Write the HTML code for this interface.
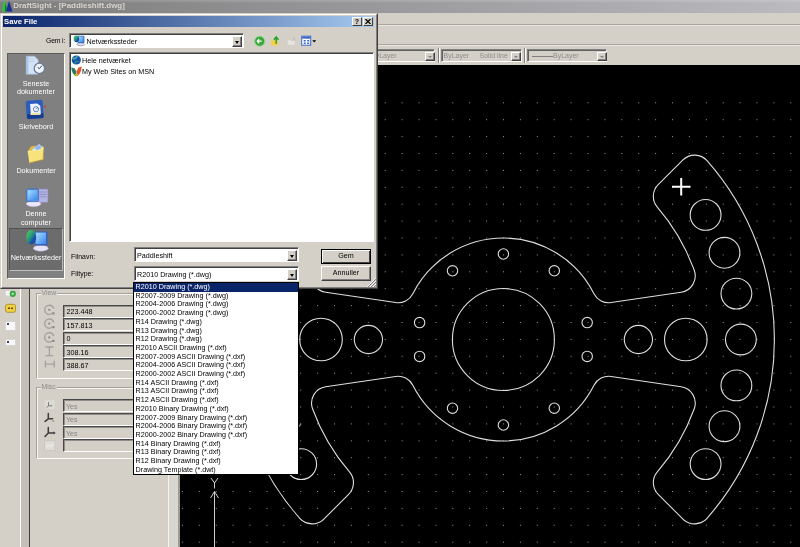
<!DOCTYPE html>
<html><head><meta charset="utf-8"><title>DraftSight</title>
<style>
html,body{margin:0;padding:0;}
body{will-change:transform;width:800px;height:547px;overflow:hidden;position:relative;background:#d4d0c8;font-family:"Liberation Sans",sans-serif;font-size:7.2px;color:#000;}
div,span{position:absolute;box-sizing:border-box;white-space:nowrap;}
.cad{position:absolute;left:180px;top:65px;}
#title{left:0;top:0;width:800px;height:12.5px;background:linear-gradient(180deg,rgba(255,255,255,0.18),rgba(255,255,255,0) 3px),linear-gradient(90deg,#7c7c7c,#bababf);}
#title span{left:13.3px;top:0.3px;font-weight:bold;font-size:7.95px;color:#d8d4cc;line-height:11px;}
.hl{height:1px;left:377px;width:423px;}
/* dialog */
#dlg{left:0;top:12.5px;width:378px;height:276px;background:#d4d0c8;border:1px solid;border-color:#d4d0c8 #404040 #404040 #d4d0c8;}
#dlg .in{left:0;top:0;right:0;bottom:0;border:1px solid;border-color:#fff #808080 #808080 #fff;}
#dt{left:2px;top:2px;width:371px;height:11.5px;background:linear-gradient(90deg,#0a246a,#a6caf0);}
#dt span{left:1px;top:0.2px;color:#fff;font-weight:bold;font-size:7.7px;line-height:11px;}
.tb{top:1px;width:10px;height:9px;background:#d4d0c8;border:1px solid;border-color:#fff #404040 #404040 #fff;font-weight:bold;font-size:7px;line-height:7px;text-align:center;}
.sunk{border:1px solid;border-color:#808080 #fff #fff #808080;box-shadow:inset 1px 1px 0 #404040;background:#fff;}
.lbl{line-height:9px;font-size:6.9px;}
.btn{background:#d4d0c8;border:1px solid;border-color:#fff #404040 #404040 #fff;box-shadow:inset -1px -1px 0 #808080;text-align:center;line-height:12px;}
.arr{width:10px;background:#d4d0c8;border:1px solid;border-color:#fff #404040 #404040 #fff;box-shadow:inset -1px -1px 0 #808080;}
.arr:after{content:"";position:absolute;left:1.5px;top:4px;border:2.5px solid transparent;border-top:3px solid #000;border-bottom:0;}
#places{left:6px;top:39.5px;width:57.5px;height:225.5px;background:#808080;border:1px solid;border-color:#5c5c5c #fff #fff #5c5c5c;}
#places .pt{left:0;width:56px;text-align:center;color:#fff;line-height:8.2px;}
#drop{left:133px;top:282px;width:166px;height:193px;background:#fff;border:1px solid #000;}
.it{position:relative;height:8.71px;line-height:8.71px;padding-left:1.6px;font-size:7.2px;}
.it.sel{background:#0a246a;color:#fff;}
/* left panel */
.grp{border:1px solid;border-color:#a6a29a #fff #fff #a6a29a;box-shadow:inset 1px 1px 0 #f6f5f2;}
.grpl{background:#d4d0c8;color:#8a8a8a;padding:0 1px;line-height:8px;font-size:6.9px;}
.fld{left:63px;width:80px;height:13px;border:1px solid;border-color:#484848 #fff #fff #484848;box-shadow:inset 1px 1px 0 rgba(64,64,64,0.45);background:#d4d0c8;}
.fld span{left:2.5px;top:2.5px;line-height:8px;}
.fld.dis span{color:#858585;font-size:7px;left:2px;}
.cmb{top:49px;height:12.5px;border:1px solid;border-color:#808080 #fff #fff #808080;box-shadow:inset 1px 1px 0 #606060;color:#8e8e8e;}
.cmb span{top:1.5px;line-height:8px;font-size:7px;}
.cmb .arr{top:1.5px;height:9.5px;width:10px;}
.cmb .arr:after{left:2px;top:3px;border:2px solid transparent;border-top:2.5px solid #808080;border-bottom:0;}
</style></head><body>
<div id="title"><span>DraftSight - [Paddleshift.dwg]</span>
<svg style="position:absolute;left:1px;top:0" width="13" height="13" viewBox="0 0 13 13"><path d="M1,11.5 L2.5,1.5 L4.5,1.5 L6.5,11.5 Z" fill="#30c43c"/><path d="M5,11.5 L8,1 L11.5,11.5 Z" fill="#1c2a9c"/><path d="M4.2,3 L5.6,8 L5,11.5 L4,11.5Z" fill="#0c6a2a"/></svg>
</div>
<div class="hl" style="top:24px;background:#a9a59d"></div><div class="hl" style="top:25px;background:#e9e7e2"></div>
<div class="hl" style="top:44px;background:#a9a59d"></div><div class="hl" style="top:45px;background:#e9e7e2"></div>
<div class="cmb" style="left:360px;width:75px;"><span style="left:10px">ByLayer</span><div class="arr" style="left:64px"></div></div>
<div style="left:438px;top:48px;width:2px;height:15px;border-left:1px solid #808080;border-right:1px solid #fff"></div>
<div class="cmb" style="left:441px;width:81px;"><span style="left:1.5px">ByLayer</span><span style="left:37.5px">Solid line</span><div class="arr" style="left:69px"></div></div>
<div style="left:524px;top:48px;width:2px;height:15px;border-left:1px solid #808080;border-right:1px solid #fff"></div>
<div class="cmb" style="left:527px;width:80px;"><div style="left:4px;top:6px;width:21px;height:1px;background:#808080"></div><span style="left:25px">ByLayer</span><div class="arr" style="left:68.5px"></div></div>
<svg class="cad" width="620" height="482" viewBox="180 65 620 482">
<defs>
<pattern id="grid" x="12.90" y="0.90" width="16.9" height="16.9" patternUnits="userSpaceOnUse"><rect x="0" y="0" width="1" height="1" fill="#969696"/></pattern>
<path id="q" d="M 0,-101.5 A 101.5 101.5 0 0 1 90.57,-45.81 A 16.5 16.5 0 0 0 107.70,-36.93 L 177.74,-47.24 A 16.5 16.5 0 0 0 190.85,-69.19 A 203.0 203.0 0 0 0 153.93,-132.35 A 16.5 16.5 0 0 1 154.77,-154.77 L 179.58,-179.58 A 16.5 16.5 0 0 1 203.65,-178.80 A 271.0 271.0 0 0 1 271.0,0"/>
</defs>
<rect x="180" y="65" width="620" height="482" fill="#000"/>
<rect x="180" y="96" width="620" height="451" fill="url(#grid)"/>
<g transform="translate(503.4,339.5)" fill="none" stroke="#dedede" stroke-width="1.1">
<use href="#q" transform="scale(1,1)"/>
<use href="#q" transform="scale(1,-1)"/>
<use href="#q" transform="scale(-1,1)"/>
<use href="#q" transform="scale(-1,-1)"/>
<circle cx="0.0" cy="-85.5" r="5.2"/>
<circle cx="0.0" cy="85.5" r="5.2"/>
<circle cx="50.9" cy="-68.7" r="5.2"/>
<circle cx="50.9" cy="68.7" r="5.2"/>
<circle cx="-50.9" cy="-68.7" r="5.2"/>
<circle cx="-50.9" cy="68.7" r="5.2"/>
<circle cx="83.8" cy="-16.9" r="5.2"/>
<circle cx="83.8" cy="16.9" r="5.2"/>
<circle cx="-83.8" cy="-16.9" r="5.2"/>
<circle cx="-83.8" cy="16.9" r="5.2"/>
<circle cx="135.0" cy="0.0" r="14.1"/>
<circle cx="182.4" cy="0.0" r="21.3"/>
<circle cx="237.5" cy="-0.0" r="15.4"/>
<circle cx="233.0" cy="-45.9" r="15.4"/>
<circle cx="233.0" cy="45.9" r="15.4"/>
<circle cx="221.1" cy="-86.7" r="15.4"/>
<circle cx="221.1" cy="86.7" r="15.4"/>
<circle cx="202.2" cy="-124.6" r="15.4"/>
<circle cx="202.2" cy="124.6" r="15.4"/>
<circle cx="-135.0" cy="0.0" r="14.1"/>
<circle cx="-182.4" cy="0.0" r="21.3"/>
<circle cx="-237.5" cy="-0.0" r="15.4"/>
<circle cx="-233.0" cy="-45.9" r="15.4"/>
<circle cx="-233.0" cy="45.9" r="15.4"/>
<circle cx="-221.1" cy="-86.7" r="15.4"/>
<circle cx="-221.1" cy="86.7" r="15.4"/>
<circle cx="-202.2" cy="-124.6" r="15.4"/>
<circle cx="-202.2" cy="124.6" r="15.4"/>
<circle cx="0.0" cy="0.0" r="51"/>
</g>
<g fill="none" stroke="#d0d0d0" stroke-width="1"><path d="M214.5,547 V491.5 M210.5,498 L214.5,491.5 L218.5,498"/><path d="M211,478 L214.5,483 L218,478 M214.5,483 V488.5"/></g>
<path d="M299.2,426.6 L301,423.6" stroke="#8a8a8a" stroke-width="1.2" fill="none"/>
<path d="M672,186.7 H690.5 M681.2,178 V195.5" stroke="#fff" stroke-width="2" fill="none"/>
</svg>
<!-- left panel -->
<div id="lp" style="left:0;top:288px;width:180px;height:259px;background:#d4d0c8;">
 <div style="left:20px;top:0;width:1px;height:259px;background:#fff"></div>
 <div style="left:21px;top:0;width:8px;height:259px;background:#c4c0b8"></div>
 <div style="left:29px;top:0;width:1px;height:259px;background:#404040"></div>
 <div style="left:168px;top:186px;width:10px;height:73px;background:#d9d6cf;border-left:1px solid #f4f3f0;"></div>
 <div style="left:178px;top:186px;width:2px;height:73px;background:#9c9a96"></div>
</div>
<div class="grp" style="left:36px;top:293px;width:120px;height:86px;"></div>
<div class="grpl" style="left:40.5px;top:288.5px;">View</div>
<div class="grp" style="left:36px;top:387px;width:120px;height:72px;"></div>
<div class="grpl" style="left:40.5px;top:382.5px;">Misc</div>
<div class="fld" style="top:304.6px"><span>223.448</span></div>
<div class="fld" style="top:318.2px"><span>157.813</span></div>
<div class="fld" style="top:331.6px"><span>0</span></div>
<div class="fld" style="top:345.0px"><span>308.16</span></div>
<div class="fld" style="top:358.2px"><span>388.67</span></div>
<div class="fld dis" style="top:399.3px"><span>Yes</span></div>
<div class="fld dis" style="top:412.8px"><span>Yes</span></div>
<div class="fld dis" style="top:426.1px"><span>Yes</span></div>
<div class="fld dis" style="top:439.0px"><span></span></div>

<svg style="position:absolute;left:0;top:288px" width="62" height="180" viewBox="0 288 62 180" fill="none">
 <g stroke="#a2a29e" stroke-width="1.4">
  <circle cx="49.3" cy="309.8" r="4.6" stroke-dasharray="24 5" stroke-dashoffset="-3"/><circle cx="49.3" cy="323.6" r="4.6" stroke-dasharray="24 5" stroke-dashoffset="-3"/><circle cx="49.3" cy="337.4" r="4.6" stroke-dasharray="24 5" stroke-dashoffset="-3"/>
  <path d="M45.4,347 H53.4 M45.4,355.6 H53.4 M49.4,347 V355.6" stroke-width="1.3"/>
  <path d="M45.4,360.8 V367.6 M54.2,360.8 V367.6 M45.4,364.2 H54.2" stroke-width="1.3"/>
 </g>
 <g fill="#8a8a88"><circle cx="49.3" cy="309.8" r="1.1"/><circle cx="49.3" cy="323.6" r="1.1"/><circle cx="49.3" cy="337.4" r="1.1"/>
  <rect x="52.5" y="312.3" width="2" height="2.2"/><rect x="52.5" y="326" width="2" height="2.2"/><rect x="52.5" y="339.8" width="2" height="2.2"/></g>
 <rect x="44.7" y="400" width="10" height="9" fill="#dcdad4"/>
 <g stroke="#3c3c3c" stroke-width="1.5" stroke-linecap="round">
  <path d="M48.5,402.5 V405.8 H52 M48.5,405.8 L46.8,407.3" stroke="#7a7a78" stroke-width="1"/>
  <path d="M48.3,413.6 V418.8 H52.6 M48.3,418.8 L45,421.4"/>
  <path d="M48.3,427.4 V432.9 H53.6 M48.3,432.9 L45,436.4"/>
 </g>
 <path d="M53.6,431.3 L55.6,432.9 L53.6,434.5z" fill="#3c3c3c"/><path d="M52.5,420 l1.5,2 m0,-2 l-1.5,2" stroke="#8a8a88" stroke-width="0.7"/>
 <rect x="44.5" y="440.8" width="10.5" height="9.8" fill="#dedcd6" stroke="#c4c0b8" stroke-width="0.6"/><path d="M46,447 l2.5,-2 2,1.5 3,-2.5" stroke="#f2f1ee" stroke-width="1" fill="none"/>
 <!-- strip icons -->
 <rect x="5.8" y="291" width="4.5" height="4.5" fill="#f4f4f4"/><circle cx="12.8" cy="293.8" r="3.1" fill="#2ea43a"/><path d="M11.3,293.8 H14.3 M12.8,292.3 V295.3" stroke="#c8f0c8" stroke-width="0.9"/>
 <rect x="5.5" y="304.3" width="10" height="8" rx="2" fill="#f0d040" stroke="#a08820" stroke-width="0.8"/><path d="M8,308.3 h2 m1,0 h2" stroke="#604800" stroke-width="1.6"/>
 <rect x="5.5" y="321.7" width="10" height="8.6" fill="#f8f8f8" stroke="#c8c8c8" stroke-width="0.5"/><rect x="7" y="323" width="2" height="2" fill="#404060"/>
 <rect x="5.5" y="339.4" width="10" height="6" fill="#f8f8f8" stroke="#c8c8c8" stroke-width="0.5"/><rect x="7" y="341" width="2" height="2" fill="#404060"/>
</svg>
<!-- dialog -->
<div id="dlg"><div class="in"></div>
 <div id="dt"><span>Save File</span>
  <div class="tb" style="left:349px">?</div><div class="tb" style="left:360px">
   <svg style="position:absolute;left:1px;top:1px" width="6" height="5" viewBox="0 0 6 5"><path d="M0.5,0 L5.5,5 M5.5,0 L0.5,5" stroke="#000" stroke-width="1.2"/></svg></div>
 </div>
 <div class="lbl" style="left:45px;top:22.5px;font-size:6.9px;letter-spacing:-0.2px">Gem i:</div>
 <div class="sunk" style="left:68px;top:19.5px;width:175px;height:14.5px;"><span style="left:16.5px;top:2.5px;line-height:9px">Netværkssteder</span><div class="arr" style="left:162px;top:2px;height:10.5px"></div>
  <svg style="position:absolute;left:2.5px;top:1px" width="13" height="11.5" viewBox="0 0 13 11.5"><ellipse cx="7.6" cy="9.3" rx="3.8" ry="1.5" fill="#e4e0f0" stroke="#505a78" stroke-width="0.5"/><rect x="4.6" y="0.8" width="6.8" height="7.2" rx="0.9" fill="#3060b8"/><rect x="5.2" y="1.4" width="5.4" height="5.8" fill="url(#scr)"/><ellipse cx="3.4" cy="3.8" rx="2.8" ry="3.4" fill="url(#glb)"/></svg>
 </div>
 <!-- toolbar icons -->
 <svg style="position:absolute;left:250px;top:19px" width="75" height="17" viewBox="250.8 32.3 75 17">
  <circle cx="259.5" cy="40.5" r="5" fill="#38a838"/><circle cx="259.5" cy="40.5" r="5" fill="none" stroke="#8fd88f" stroke-width="0.8"/><path d="M261.5,40.5 H257 M259,38.3 L257,40.5 L259,42.7" stroke="#fff" stroke-width="1.2" fill="none"/>
  <path d="M271,39 h3 l1,1 h3 v5 h-7z" fill="#f0d050"/><path d="M276,43 V37 M273.7,39 L276,36.3 L278.3,39" stroke="#28a028" stroke-width="1.5" fill="none"/>
  <path d="M287,39 h3 l1,1 h4 v4.5 h-8z" fill="#e6e4de" stroke="#c8c4bc" stroke-width="0.5"/><circle cx="294" cy="38" r="1.3" fill="#c8c4bc"/>
  <rect x="301.5" y="35.5" width="9" height="9" fill="#fff" stroke="#3868c8" stroke-width="1"/><rect x="302" y="36" width="8" height="2" fill="#3868c8"/><path d="M303.5,40 h2 m1.5,0 h2 M303.5,42.5 h2 m1.5,0 h2" stroke="#3868c8" stroke-width="1.4"/>
  <path d="M312,39.5 h4 l-2,2.2z" fill="#000"/>
 </svg>
 <div id="places"><div style="left:0;top:-1px;width:56px;height:224px">
  <div style="left:1px;top:175px;width:54px;height:43px;background:#6c6c6c;border:1px solid;border-color:#505050 #b8b8b8 #c0c0c0 #505050;"></div>
  <div class="pt" style="top:26.5px">Seneste</div><div class="pt" style="top:35px">dokumenter</div>
  <div class="pt" style="top:70px">Skrivebord</div>
  <div class="pt" style="top:113.5px">Dokumenter</div>
  <div class="pt" style="top:157px">Denne</div><div class="pt" style="top:165.5px">computer</div>
  <div class="pt" style="top:201px">Netværkssteder</div>
  <svg style="position:absolute;left:0;top:0" width="56" height="224" viewBox="7 53 56 224">
   <defs><linearGradient id="scr" x1="0" y1="0" x2="1" y2="1"><stop offset="0" stop-color="#a8e0ff"/><stop offset="1" stop-color="#3a86ec"/></linearGradient>
   <linearGradient id="glb" x1="0" y1="0" x2="1" y2="1"><stop offset="0" stop-color="#60d060"/><stop offset="0.45" stop-color="#2a9a78"/><stop offset="0.7" stop-color="#1a4fa8"/><stop offset="1" stop-color="#163c90"/></linearGradient></defs>
   <!-- recent -->
   <path d="M25.3,56.2 h8.2 l3.6,3.6 v14.4 h-11.8z" fill="#d4e2f6" stroke="#a4bce0" stroke-width="0.7"/><path d="M25.6,57 h1.8 v16.8 h-1.8z" fill="#a8c4ec"/><path d="M27.5,59 h6 M27.5,61.5 h6" stroke="#b8cce8" stroke-width="0.8"/>
   <circle cx="38.4" cy="68.4" r="5.2" fill="#eef4fc" stroke="#6c7c98" stroke-width="1.3"/><path d="M38.4,68.6 L41,65.6 M38.4,68.6 L36.6,67.4" stroke="#38465e" stroke-width="1" fill="none"/>
   <!-- desktop -->
   <rect x="25.2" y="100.2" width="17" height="18.6" rx="2" fill="#2c5cbc" transform="rotate(-4 33.7 109.5)"/><rect x="25.6" y="113.5" width="16.4" height="5" rx="1.5" fill="#183c8c" transform="rotate(-4 33.7 109.5)"/>
   <path d="M29.5,103.6 h7 l3,2.6 v8.6 h-10z" fill="#eef4fc" transform="rotate(-4 33.7 109.5)"/><circle cx="35" cy="109.2" r="2.6" fill="none" stroke="#5878b8" stroke-width="0.9"/><path d="M35,109.2 l1.8,-1.8" stroke="#38508c" stroke-width="0.8"/><path d="M29.5,113 h9.5 v1.8 h-9.5z" fill="#f0e8a0"/><circle cx="44" cy="106.6" r="1" fill="#c04030"/>
   <!-- docs -->
   <path d="M27,150.5 l3.2,-4.2 4.4,-0.6 1,1.4 6.6,-1 0.4,13.4 -13.4,3z" fill="#e0b840"/><path d="M31,149.5 l7,-5.6 4.6,4.6 -5.8,7.6z" fill="#cfe2fa"/><path d="M33.4,147.8 l4.4,-3 3.4,3.4 -4,4z" fill="#8cb8ee"/>
   <path d="M26.7,151.6 l11,-1.6 5,-2.6 -1.4,12.4 -13,3.2z" fill="#f8e27c"/><path d="M26.7,151.6 l11,-1.6 5,-2.6" stroke="#fff4b8" stroke-width="0.7" fill="none"/><path d="M28.3,163 l13,-3.2" stroke="#b89428" stroke-width="0.8"/>
   <!-- computer -->
   <rect x="37.2" y="189" width="9.8" height="13.4" rx="0.8" fill="#b4b4e0" stroke="#8484b8" stroke-width="0.6"/><path d="M38.6,192 h7 M38.6,194.4 h7 M38.6,196.8 h7" stroke="#8c8cc4" stroke-width="0.9"/>
   <ellipse cx="32.6" cy="203.8" rx="7.4" ry="2.9" fill="#ece8f8" stroke="#b0a8d0" stroke-width="0.5"/>
   <rect x="25.4" y="189" width="12.2" height="12.6" rx="1.4" fill="#5a94e4" stroke="#3868c0" stroke-width="0.7"/><rect x="26.6" y="190.2" width="9.8" height="9.6" fill="url(#scr)"/>
   <!-- network -->
   <ellipse cx="39.8" cy="248.2" rx="7.4" ry="3" fill="#e8e2f6" stroke="#b0a8d0" stroke-width="0.5"/>
   <rect x="33.6" y="231.6" width="13" height="13.8" rx="1.6" fill="#3464c0"/><rect x="34.6" y="232.6" width="10.4" height="11.4" fill="url(#scr)"/>
   <ellipse cx="30.2" cy="237.2" rx="5" ry="7.2" fill="url(#glb)"/>
  </svg>
 </div></div>
 <div class="sunk" style="left:68px;top:38.5px;width:305px;height:189.5px;">
  <span style="left:12px;top:2.5px;line-height:9px">Hele netværket</span>
  <span style="left:12px;top:14px;line-height:9px">My Web Sites on MSN</span>
  <svg style="position:absolute;left:1px;top:2px" width="11" height="22" viewBox="0 0 11 22"><circle cx="5.3" cy="5" r="4.6" fill="#1a52b0"/><path d="M1.6,3 q2.4,2 4.4,-1.6" stroke="#48b0a0" stroke-width="1.7" fill="none" stroke-linecap="round"/><path d="M3.4,8.4 q1.2,-2.6 3.6,-1.8" stroke="#2e9a70" stroke-width="1.2" fill="none" stroke-linecap="round"/>
   <path d="M0.3,12.4 L3.6,13.2 L5.4,16.4 L5.2,21.4 Q0.8,19.4 0.3,12.4z" fill="#2a7c62"/><path d="M10.7,11.6 L7.2,12.8 L5.6,16.4 L5.8,21.4 Q10.2,19 10.7,11.6z" fill="#ea5420"/><path d="M3.4,19.4 Q5.4,17.6 7.4,19.4 Q5.4,22.8 3.4,19.4z" fill="#c8c030"/></svg>
 </div>
 <div class="lbl" style="left:70px;top:238.5px;">Filnavn:</div>
 <div class="sunk" style="left:133px;top:233.5px;width:165px;height:15px;"><span style="left:2px;top:3px;line-height:9px">Paddleshift</span><div class="arr" style="left:152px;top:2px;height:11px"></div></div>
 <div class="lbl" style="left:70px;top:255.5px;">Filtype:</div>
 <div class="sunk" style="left:133px;top:252.5px;width:165px;height:15px;"><span style="left:2px;top:3px;line-height:9px">R2010 Drawing (*.dwg)</span><div class="arr" style="left:152px;top:2px;height:11px"></div></div>
 <div class="btn" style="left:320px;top:235px;width:50px;height:15px;border-color:#000;box-shadow:inset 1px 1px 0 #fff,inset -1px -1px 0 #404040;">Gem</div>
 <div class="btn" style="left:320px;top:252px;width:50px;height:15px;">Annuller</div>
 <svg style="position:absolute;left:365.5px;top:264px" width="10" height="10" viewBox="0 0 10 10"><path d="M9,1 L1,9 M9,4 L4,9 M9,7 L7,9" stroke="#808080" stroke-width="1"/><path d="M9,0 L0,9 M9,3 L3,9 M9,6 L6,9" stroke="#fff" stroke-width="0.8"/></svg>
</div>
<!-- dropdown list -->
<div id="drop">
<div class="it sel">R2010 Drawing (*.dwg)</div>
<div class="it">R2007-2009 Drawing (*.dwg)</div>
<div class="it">R2004-2006 Drawing (*.dwg)</div>
<div class="it">R2000-2002 Drawing (*.dwg)</div>
<div class="it">R14 Drawing (*.dwg)</div>
<div class="it">R13 Drawing (*.dwg)</div>
<div class="it">R12 Drawing (*.dwg)</div>
<div class="it">R2010 ASCII Drawing (*.dxf)</div>
<div class="it">R2007-2009 ASCII Drawing (*.dxf)</div>
<div class="it">R2004-2006 ASCII Drawing (*.dxf)</div>
<div class="it">R2000-2002 ASCII Drawing (*.dxf)</div>
<div class="it">R14 ASCII Drawing (*.dxf)</div>
<div class="it">R13 ASCII Drawing (*.dxf)</div>
<div class="it">R12 ASCII Drawing (*.dxf)</div>
<div class="it">R2010 Binary Drawing (*.dxf)</div>
<div class="it">R2007-2009 Binary Drawing (*.dxf)</div>
<div class="it">R2004-2006 Binary Drawing (*.dxf)</div>
<div class="it">R2000-2002 Binary Drawing (*.dxf)</div>
<div class="it">R14 Binary Drawing (*.dxf)</div>
<div class="it">R13 Binary Drawing (*.dxf)</div>
<div class="it">R12 Binary Drawing (*.dxf)</div>
<div class="it">Drawing Template (*.dwt)</div>
</div>
</body></html>
